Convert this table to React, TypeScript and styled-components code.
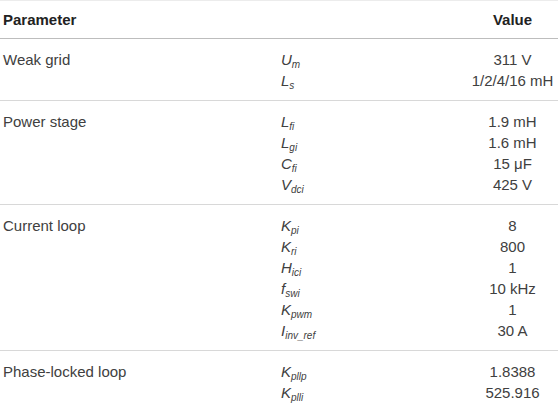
import React from "react";
import styled, { createGlobalStyle } from "styled-components";

const Global = createGlobalStyle`
  html, body { margin: 0; padding: 0; background: #fff; }
  body { font-family: "Liberation Sans", Arial, sans-serif; }
`;

const Table = styled.table`
  width: 558px;
  border-collapse: collapse;
  table-layout: fixed;
  border-top: 1px solid #ececec;
  border-bottom: 1px solid #ececec;
  font-size: 15px;
  color: #404040;
`;

const Col = styled.col<{ $w: number }>`
  width: ${(p) => p.$w}px;
`;

const HeadCell = styled.th<{ $align?: string }>`
  font-weight: bold;
  color: #222;
  text-align: ${(p) => p.$align || "left"};
  padding: 9px 0 9px 3px;
  line-height: 19px;
  border-bottom: 1px solid #bdbdbd;
`;

const Row = styled.tr`
  border-bottom: 1px solid #d8d8d8;
  &:last-child { border-bottom: none; }
`;

const Cell = styled.td<{ $align?: string }>`
  vertical-align: top;
  padding: 10px 0 9px 3px;
  text-align: ${(p) => p.$align || "left"};
`;

const Line = styled.div`
  line-height: 21px;
  height: 21px;
  white-space: nowrap;
`;

const Var = styled.span`
  font-style: italic;
`;

const Sub = styled.sub`
  font-size: 10px;
  font-style: italic;
  vertical-align: -3px;
  line-height: 0;
`;

type Param = { v: string; s: string; val: string };
type Group = { name: string; params: Param[] };

const groups: Group[] = [
  { name: "Weak grid", params: [
    { v: "U", s: "m", val: "311 V" },
    { v: "L", s: "s", val: "1/2/4/16 mH" },
  ] },
  { name: "Power stage", params: [
    { v: "L", s: "fi", val: "1.9 mH" },
    { v: "L", s: "gi", val: "1.6 mH" },
    { v: "C", s: "fi", val: "15 μF" },
    { v: "V", s: "dci", val: "425 V" },
  ] },
  { name: "Current loop", params: [
    { v: "K", s: "pi", val: "8" },
    { v: "K", s: "ri", val: "800" },
    { v: "H", s: "ici", val: "1" },
    { v: "f", s: "swi", val: "10 kHz" },
    { v: "K", s: "pwm", val: "1" },
    { v: "I", s: "inv_ref", val: "30 A" },
  ] },
  { name: "Phase-locked loop", params: [
    { v: "K", s: "pllp", val: "1.8388" },
    { v: "K", s: "plli", val: "525.916" },
  ] },
];

export default function App() {
  return (
    <>
      <Global />
      <Table>
        <colgroup>
          <Col $w={278} />
          <Col $w={186} />
          <Col $w={94} />
        </colgroup>
        <thead>
          <tr>
            <HeadCell>Parameter</HeadCell>
            <HeadCell />
            <HeadCell $align="center">Value</HeadCell>
          </tr>
        </thead>
        <tbody>
          {groups.map((g) => (
            <Row key={g.name}>
              <Cell><Line>{g.name}</Line></Cell>
              <Cell>
                {g.params.map((p) => (
                  <Line key={p.v + p.s}>
                    <Var>{p.v}</Var>
                    <Sub>{p.s}</Sub>
                  </Line>
                ))}
              </Cell>
              <Cell $align="center">
                {g.params.map((p) => (
                  <Line key={p.v + p.s}>{p.val}</Line>
                ))}
              </Cell>
            </Row>
          ))}
        </tbody>
      </Table>
    </>
  );
}
